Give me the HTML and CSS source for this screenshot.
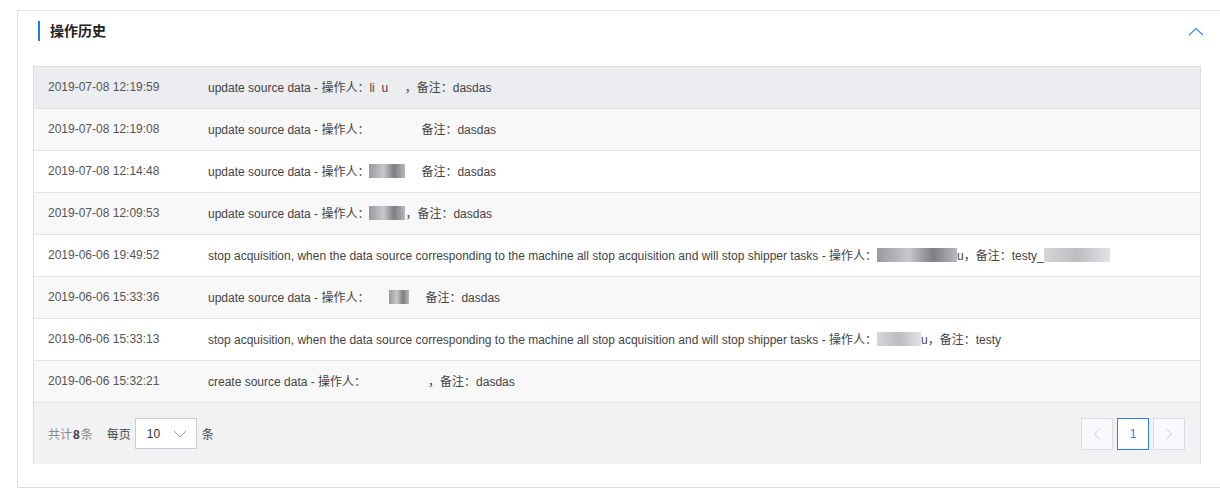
FILE: index.html
```html
<!DOCTYPE html>
<html lang="zh">
<head>
<meta charset="utf-8">
<link rel="stylesheet" href="styles.css">
</head>
<body>
<div class="card">
  <div class="card-head">
    <div class="title">操作历史</div>
    <svg class="collapse" width="16" height="10" viewBox="0 0 16 10"><path d="M1 8 L8 1.5 L15 8" fill="none" stroke="#3d8af7" stroke-width="1.2"/></svg>
  </div>
  <div class="table">
    <div class="row hover"><div class="time">2019-07-08 12:19:59</div><div class="desc">update source data - 操作人：li&nbsp;&nbsp;u&nbsp;&nbsp;&nbsp;&nbsp;&nbsp;，备注：dasdas</div></div>
    <div class="row odd"><div class="time">2019-07-08 12:19:08</div><div class="desc">update source data - 操作人：<span class="blank w52"></span>备注：dasdas</div></div>
    <div class="row"><div class="time">2019-07-08 12:14:48</div><div class="desc">update source data - 操作人：<span class="smudge w36"></span><span class="blank w16"></span>备注：dasdas</div></div>
    <div class="row odd"><div class="time">2019-07-08 12:09:53</div><div class="desc">update source data - 操作人：<span class="smudge w36"></span>，备注：dasdas</div></div>
    <div class="row"><div class="time">2019-06-06 19:49:52</div><div class="desc">stop acquisition, when the data source corresponding to the machine all stop acquisition and will stop shipper tasks - 操作人：<span class="smudge w80"></span>u，备注：testy_<span class="smudge light w66"></span></div></div>
    <div class="row odd"><div class="time">2019-06-06 15:33:36</div><div class="desc">update source data - 操作人：<span class="blank w20"></span><span class="smudge w20"></span><span class="blank w16"></span>备注：dasdas</div></div>
    <div class="row"><div class="time">2019-06-06 15:33:13</div><div class="desc">stop acquisition, when the data source corresponding to the machine all stop acquisition and will stop shipper tasks - 操作人：<span class="smudge light w44"></span>u，备注：testy<span class="blank w66"></span></div></div>
    <div class="row odd"><div class="time">2019-06-06 15:32:21</div><div class="desc">create source data - 操作人：<span class="blank w62"></span>，备注：dasdas</div></div>
    <div class="footer">
      <div class="left">
        <span class="total">共计<b>8</b>条</span>
        <span class="per">每页</span>
        <div class="select"><span>10</span><svg width="14" height="8" viewBox="0 0 14 8"><path d="M1 1 L7 7 L13 1" fill="none" stroke="#999" stroke-width="1"/></svg></div>
        <span class="per">条</span>
      </div>
      <div class="pager">
        <div class="pbtn disabled"><svg width="8" height="12" viewBox="0 0 8 12"><path d="M6.5 1 L1.5 6 L6.5 11" fill="none" stroke="#ccc" stroke-width="1"/></svg></div>
        <div class="pbtn active">1</div>
        <div class="pbtn disabled"><svg width="8" height="12" viewBox="0 0 8 12"><path d="M1.5 1 L6.5 6 L1.5 11" fill="none" stroke="#ccc" stroke-width="1"/></svg></div>
      </div>
    </div>
  </div>
</div>
</body>
</html>
```
FILE: styles.css
```css
html, body { margin: 0; padding: 0; background: #fff; overflow: hidden; }
body {
  font-family: "Liberation Sans", "Noto Sans CJK SC", sans-serif;
  color: #333;
  width: 1220px;
  height: 489px;
}
.card {
  margin: 10px 0 0 17px;
  width: 1210px;
  height: 478px;
  border: 1px solid #dcdfe6;
  border-right: none;
  box-sizing: border-box;
  padding: 10px 0 0 15px;
}
.card-head {
  height: 20px;
  margin-bottom: 25px;
  display: flex;
  align-items: center;
  justify-content: space-between;
  padding: 0 23px 0 5px;
}
.title {
  border-left: 2px solid #1f78f0;
  padding-left: 10px;
  font-size: 14px;
  line-height: 20px;
  font-weight: 600;
  color: #222;
}
.collapse { display: block; margin-top: 1px; }
.table {
  width: 1168px;
  border: 1px solid #dddddd;
  border-bottom: none;
  box-sizing: border-box;
  font-size: 12px;
  color: #444;
}
.row {
  height: 42px;
  display: flex;
  align-items: center;
  border-bottom: 1px solid #e3e3e3;
  box-sizing: border-box;
  background: #fff;
  padding-bottom: 2px;
}
.row.odd { background: #f8f8f8; }
.row.hover { background: #ebedf0; }
.time { width: 160px; padding-left: 14px; flex: none; color: #555; }
.desc { flex: 1; white-space: nowrap; color: #444; }
.smudge {
  display: inline-block;
  height: 14px;
  vertical-align: -2px;
  background: linear-gradient(90deg, #9a9a9e 0%, #c8c8cc 40%, #7d7d82 70%, #b9b9bd 100%);
}
.smudge.light { background: linear-gradient(90deg, #d6d6d8 0%, #bdbdc0 50%, #e2e2e4 100%); }
.blank { display: inline-block; height: 14px; }
.w16 { width: 16px; } .w20 { width: 20px; } .w36 { width: 36px; } .w44 { width: 44px; }
.w52 { width: 52px; } .w62 { width: 62px; } .w66 { width: 66px; } .w80 { width: 80px; }
.footer {
  height: 61px;
  background: #f2f2f2;
  display: flex;
  align-items: center;
  justify-content: space-between;
  padding: 0 15px 0 14px;
}
.left { display: flex; align-items: center; font-size: 12px; }
.total { color: #888; margin-right: 14px; }
.total b { color: #444; font-weight: 700; margin: 0 1px; }
.per { color: #444; }
.select {
  width: 62px;
  height: 31px;
  box-sizing: border-box;
  border: 1px solid #c9ccd3;
  background: #fff;
  margin: 0 5px 0 4px;
  display: flex;
  align-items: center;
  padding-left: 11px;
  gap: 13px;
  font-size: 12px;
  color: #333;
}
.pager { display: flex; gap: 4px; }
.pbtn {
  width: 32px;
  height: 32px;
  box-sizing: border-box;
  border: 1px solid #d8dbe2;
  background: #f8f9fc;
  display: flex;
  align-items: center;
  justify-content: center;
  font-size: 12px;
}
.pbtn.active { border-color: #2d7ef0; background: #fff; color: #2d7ef0; }
```
